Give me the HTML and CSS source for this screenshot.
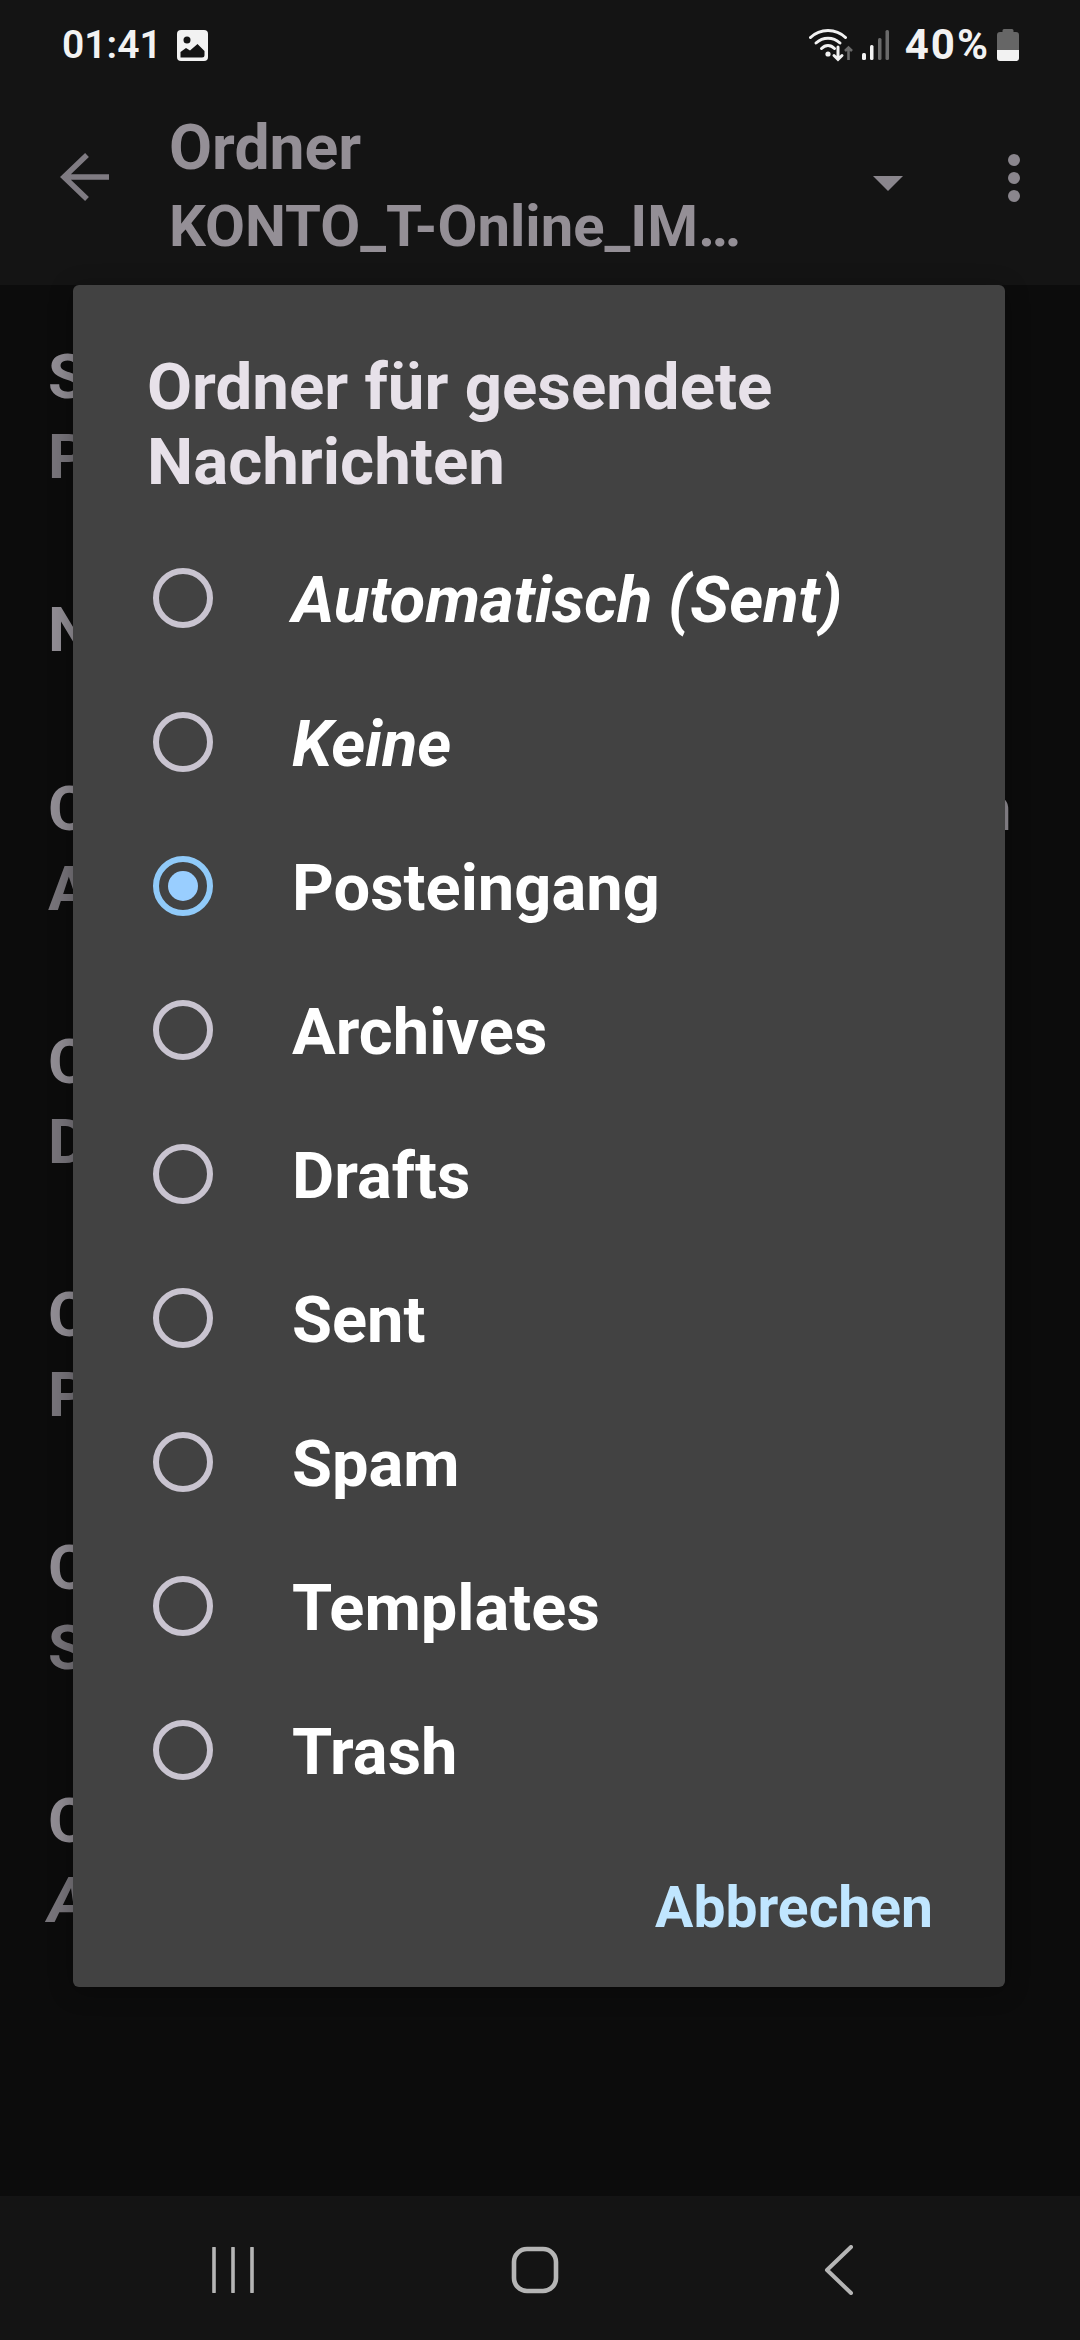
FILE: index.html
```html
<!DOCTYPE html>
<html lang="de">
<head>
  <meta charset="UTF-8" />
  <meta name="viewport" content="width=device-width, initial-scale=1" />
  <title>Ordner</title>
  <link rel="stylesheet" href="styles.css">
</head>
<body>

<div class="phone">
  <div class="statusbar">
    <div class="status-left">
      <span class="time">01:41</span>
      <svg class="pic-icon" width="31" height="31" viewBox="0 0 31 31">
        <rect width="31" height="31" rx="4" fill="#f2f2f2"/>
        <circle cx="10" cy="10" r="3.5" fill="#141414"/>
        <path d="M3.5 27.5 V22 L9 18 L13 20.5 L20.5 14 L27.5 21 V25 Q27.5 27.5 25 27.5 Z" fill="#141414"/>
      </svg>
    </div>
    <div class="status-right">
      <svg class="wifi-icon" width="44" height="34" viewBox="0 0 44 34">
        <g fill="none" stroke="#f2f2f2" stroke-width="3" stroke-linecap="round">
          <path d="M1.5 9.5 C11 0 27 0 36.5 9.5"/>
          <path d="M7 15 C14 8.5 24 8.5 31 15"/>
          <path d="M12.5 20.5 C16.5 16.5 21.5 16.5 25.5 20.5"/>
          <path d="M29 19 V31 M25 27.5 L29 31.5 L33 27.5"/>
        </g>
        <circle cx="19" cy="26" r="2.6" fill="#f2f2f2"/>
        <path d="M39.5 32 V20 M36 23 L39.5 19.5 L43 23" fill="none" stroke="#6a6a6a" stroke-width="2.6"/>
      </svg>
      <svg class="signal-icon" width="27" height="30" viewBox="0 0 27 30">
        <rect x="0" y="23" width="4" height="7" rx="1.5" fill="#f2f2f2"/>
        <rect x="8" y="15" width="3.5" height="15" rx="1.5" fill="#f2f2f2"/>
        <rect x="16" y="8" width="3.5" height="22" rx="1.5" fill="#6a6a6a"/>
        <rect x="23.5" y="0" width="3.5" height="30" rx="1.5" fill="#6a6a6a"/>
      </svg>
      <span class="battery-text">40%</span>
      <svg class="battery-icon" width="22" height="32" viewBox="0 0 22 32">
        <path d="M7 0 H15 Q16.5 0 16.5 1.5 V3 H19 Q22 3 22 6 V21 H0 V6 Q0 3 3 3 H5.5 V1.5 Q5.5 0 7 0 Z" fill="#666"/>
        <path d="M0 21 H22 V29 Q22 32 19 32 H3 Q0 32 0 29 Z" fill="#f2f2f2"/>
      </svg>
    </div>
  </div>

  <div class="toolbar">
    <svg class="back-icon" width="50" height="48" viewBox="0 0 50 48">
      <path d="M49 24 H4 M27 2 L4 24 L27 46" fill="none" stroke="#7f7b82" stroke-width="5.5"/>
    </svg>
    <div class="toolbar-titles">
      <div class="toolbar-line">Ordner</div>
      <div class="toolbar-line toolbar-account">KONTO_T-Online_IM…</div>
    </div>
    <span class="dropdown-arrow"></span>
    <div class="overflow-dots"><i></i><i></i><i></i></div>
  </div>

  <div class="content">
    <div class="row"><div class="row-title">Spezialordner</div><div class="row-sub">Posteingang</div></div>
    <div class="row"><div class="row-title">Nach Server verschieben</div></div>
    <div class="row"><div class="row-title row-long">Ordner für archivierte Nachrichten</div><div class="row-sub">Archives</div></div>
    <div class="row"><div class="row-title">Ordner für Entwürfe</div><div class="row-sub">Drafts</div></div>
    <div class="row"><div class="row-title">Ordner für gesendete</div><div class="row-sub">Posteingang</div></div>
    <div class="row"><div class="row-title">Ordner für Spam</div><div class="row-sub">Spam</div></div>
    <div class="row"><div class="row-title">Ordner für Papierkorb</div><div class="row-sub row-auto">Automatisch (Trash)</div></div>
  </div>

  <div class="navbar">
    <svg width="42" height="46" viewBox="0 0 42 46">
      <path d="M2 1 V45 M21 1 V45 M40 1 V45" fill="none" stroke="#b5b5b5" stroke-width="3.6" stroke-linecap="round"/>
    </svg>
    <svg class="nav-home" width="48" height="48" viewBox="0 0 48 48">
      <rect x="3" y="3" width="42" height="42" rx="13" fill="none" stroke="#b5b5b5" stroke-width="4.6"/>
    </svg>
    <svg width="30" height="50" viewBox="0 0 30 50">
      <path d="M27 2 L3 25 L27 48" fill="none" stroke="#b5b5b5" stroke-width="4" stroke-linecap="round" stroke-linejoin="round"/>
    </svg>
  </div>

  <div class="dialog">
    <h2 class="dialog-title">Ordner für gesendete Nachrichten</h2>
    <div class="options">
      <div class="option"><span class="radio"></span><span class="option-label auto">Automatisch (Sent)</span></div>
      <div class="option"><span class="radio"></span><span class="option-label auto">Keine</span></div>
      <div class="option"><span class="radio checked"></span><span class="option-label">Posteingang</span></div>
      <div class="option"><span class="radio"></span><span class="option-label">Archives</span></div>
      <div class="option"><span class="radio"></span><span class="option-label">Drafts</span></div>
      <div class="option"><span class="radio"></span><span class="option-label">Sent</span></div>
      <div class="option"><span class="radio"></span><span class="option-label">Spam</span></div>
      <div class="option"><span class="radio"></span><span class="option-label">Templates</span></div>
      <div class="option"><span class="radio"></span><span class="option-label">Trash</span></div>
    </div>
    <div class="dialog-actions"><span class="cancel">Abbrechen</span></div>
  </div>
</div>

</body>
</html>
```

FILE: styles.css
```css
* {
  box-sizing: border-box;
}

body {
  margin: 0;
  background: #0c0c0c;
  font-family: Roboto, "Liberation Sans", sans-serif;
}

.phone {
  position: relative;
  width: 1080px;
  height: 2340px;
  display: flex;
  flex-direction: column;
  overflow: hidden;
}

.statusbar {
  height: 90px;
  padding: 0 61px 0 62px;
  background: #141414;
  display: flex;
  justify-content: space-between;
  align-items: center;
}

.status-left,
.status-right {
  display: flex;
  align-items: center;
}

.time,
.battery-text {
  color: #f2f2f2;
  font-size: 39px;
  font-weight: 600;
  line-height: 90px;
}

.pic-icon {
  margin-left: 15px;
}

.wifi-icon {
  margin-right: 9px;
}

.battery-text {
  margin: 0 7px 0 16px;
  font-size: 42px;
  font-weight: 700;
  letter-spacing: 2px;
}

.toolbar {
  height: 195px;
  background: #141414;
  display: flex;
  align-items: center;
  padding: 0 60px 20px 60px;
}

.back-icon {
  margin-top: -2px;
}

.toolbar-titles {
  margin-left: 59px;
  padding-top: 18px;
  flex: 1;
}

.toolbar-line {
  color: #948f96;
  font-size: 62.5px;
  font-weight: 700;
  line-height: 78px;
  white-space: nowrap;
}

.toolbar-account {
  font-size: 58px;
}

.dropdown-arrow {
  width: 0;
  height: 0;
  border-left: 15px solid transparent;
  border-right: 15px solid transparent;
  border-top: 15px solid #8a868d;
  margin: 12px 105px 0 0;
}

.overflow-dots {
  display: flex;
  flex-direction: column;
  gap: 6px;
}

.overflow-dots i {
  display: block;
  width: 12px;
  height: 12px;
  border-radius: 50%;
  background: #8a868d;
}

.content {
  flex: 1;
  padding: 6px 0 0 48px;
  background: #0c0c0c;
}

.row {
  min-height: 179px;
  padding-top: 46px;
  margin-bottom: 47px;
  white-space: nowrap;
}

.row:nth-child(2) {
  margin-bottom: 0;
}

.row-title,
.row-sub {
  font-size: 62px;
  font-weight: 700;
  line-height: 80px;
  color: #918d94;
}

.row-long {
  letter-spacing: 0.27px;
}

.row-sub {
  color: #77747a;
}

.row-auto {
  font-style: italic;
}

.navbar {
  height: 144px;
  background: #141414;
  display: flex;
  align-items: center;
  padding: 4px 226px 0 212px;
  justify-content: space-between;
}

.nav-home {
  margin-right: 8px;
}

/* dialog sits over the folder list */
.dialog {
  position: absolute;
  left: 73px;
  top: 285px;
  width: 932px;
  height: 1702px;
  background: #424242;
  border-radius: 6px;
  box-shadow: 0 4px 24px rgba(0, 0, 0, 0.3);
  padding: 64px 0 0;
}

.dialog-title {
  margin: 0 0 27px;
  padding: 0 74px;
  color: #e7e1e9;
  font-size: 65.4px;
  font-weight: 700;
  line-height: 75px;
}

.option {
  height: 144px;
  display: flex;
  align-items: center;
  padding-left: 80px;
}

.radio {
  width: 60px;
  height: 60px;
  border: 6px solid #c9c4d0;
  border-radius: 50%;
  margin-right: 79px;
  display: flex;
  align-items: center;
  justify-content: center;
}

.radio.checked {
  border-color: #90caf9;
}

.radio.checked::after {
  content: "";
  width: 30px;
  height: 30px;
  border-radius: 50%;
  background: #99ceff;
}

.option-label {
  padding-top: 5px;
  color: #fff;
  font-size: 65px;
  font-weight: 700;
  line-height: 75px;
}

.option-label.auto {
  font-style: italic;
}

.dialog-actions {
  margin-top: 48px;
  padding-right: 72px;
  display: flex;
  justify-content: flex-end;
}

.cancel {
  color: #c0e6ff;
  font-size: 57px;
  font-weight: 700;
  line-height: 75px;
}
```
